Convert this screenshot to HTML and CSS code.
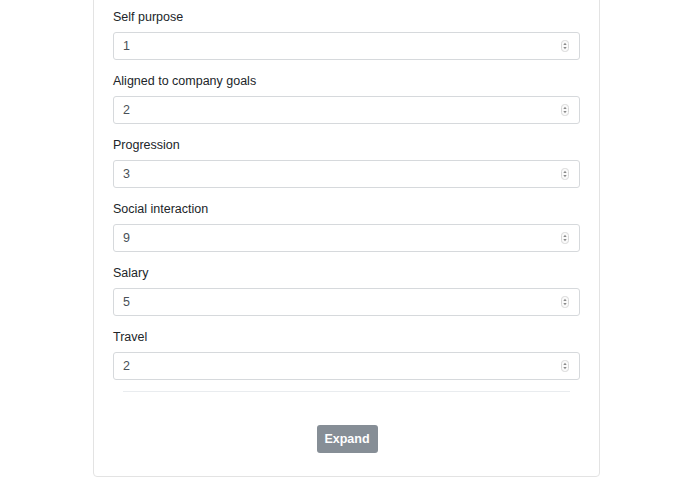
FILE: index.html
```html
<!DOCTYPE html>
<html>
<head>
<meta charset="utf-8">
<link rel="stylesheet" href="styles.css">
</head>
<body>
<div class="card">
  <form class="form">
    <div class="group">
      <label class="label">Self purpose</label>
      <div class="field"><span class="value">1</span><svg class="spin" width="8" height="12" viewBox="0 0 8 12"><rect x="0.5" y="0.5" width="7" height="11" rx="3" fill="#fafafa" stroke="#d8d8d8"/><path d="M2.3 5 L4 2.8 L5.7 5 Z M2.3 7 L4 9.2 L5.7 7 Z" fill="#8a8a8a"/></svg></div>
    </div>
    <div class="group">
      <label class="label">Aligned to company goals</label>
      <div class="field"><span class="value">2</span><svg class="spin" width="8" height="12" viewBox="0 0 8 12"><rect x="0.5" y="0.5" width="7" height="11" rx="3" fill="#fafafa" stroke="#d8d8d8"/><path d="M2.3 5 L4 2.8 L5.7 5 Z M2.3 7 L4 9.2 L5.7 7 Z" fill="#8a8a8a"/></svg></div>
    </div>
    <div class="group">
      <label class="label">Progression</label>
      <div class="field"><span class="value">3</span><svg class="spin" width="8" height="12" viewBox="0 0 8 12"><rect x="0.5" y="0.5" width="7" height="11" rx="3" fill="#fafafa" stroke="#d8d8d8"/><path d="M2.3 5 L4 2.8 L5.7 5 Z M2.3 7 L4 9.2 L5.7 7 Z" fill="#8a8a8a"/></svg></div>
    </div>
    <div class="group">
      <label class="label">Social interaction</label>
      <div class="field"><span class="value">9</span><svg class="spin" width="8" height="12" viewBox="0 0 8 12"><rect x="0.5" y="0.5" width="7" height="11" rx="3" fill="#fafafa" stroke="#d8d8d8"/><path d="M2.3 5 L4 2.8 L5.7 5 Z M2.3 7 L4 9.2 L5.7 7 Z" fill="#8a8a8a"/></svg></div>
    </div>
    <div class="group">
      <label class="label">Salary</label>
      <div class="field"><span class="value">5</span><svg class="spin" width="8" height="12" viewBox="0 0 8 12"><rect x="0.5" y="0.5" width="7" height="11" rx="3" fill="#fafafa" stroke="#d8d8d8"/><path d="M2.3 5 L4 2.8 L5.7 5 Z M2.3 7 L4 9.2 L5.7 7 Z" fill="#8a8a8a"/></svg></div>
    </div>
    <div class="group">
      <label class="label">Travel</label>
      <div class="field"><span class="value">2</span><svg class="spin" width="8" height="12" viewBox="0 0 8 12"><rect x="0.5" y="0.5" width="7" height="11" rx="3" fill="#fafafa" stroke="#d8d8d8"/><path d="M2.3 5 L4 2.8 L5.7 5 Z M2.3 7 L4 9.2 L5.7 7 Z" fill="#8a8a8a"/></svg></div>
    </div>
    <hr class="rule">
    <div class="actions">
      <button type="button" class="btn">Expand</button>
    </div>
  </form>
</div>
</body>
</html>
```
FILE: styles.css
```css
html, body {
  margin: 0;
  padding: 0;
  background: #ffffff;
}
body {
  font-family: "Liberation Sans", Arial, Helvetica, sans-serif;
  font-size: 12.5px;
  color: #212529;
}
.card {
  margin: -40px 0 0 93px;
  border: 1px solid #e3e3e3;
  border-radius: 4px;
  padding: 0 19px 23px 19px;
  box-sizing: content-box;
  width: 467px;
}
.form {
  padding-top: 46px;
}
.group {
  margin-bottom: 11px;
}
.label {
  display: block;
  line-height: 20px;
  margin-bottom: 5px;
  color: #212529;
}
.field {
  height: 28px;
  box-sizing: border-box;
  border: 1px solid #d6d9dc;
  border-radius: 3px;
  display: flex;
  align-items: center;
  justify-content: space-between;
  padding: 0 9px 0 9px;
  background: #fff;
}
.value {
  color: #495057;
  font-size: 12.5px;
}
.spin {
  display: block;
  margin-right: 1px;
}
.rule {
  border: 0;
  border-top: 1px solid #e9ecef;
  margin: 0 10px 0 10px;
  height: 0;
}
.actions {
  display: flex;
  justify-content: center;
  padding-top: 33px;
}
.btn {
  width: 61px;
  height: 28px;
  border: 0;
  border-radius: 3px;
  background: #868e96;
  color: #fff;
  font-family: "Liberation Sans", Arial, sans-serif;
  font-size: 12.5px;
  font-weight: 600;
  padding: 0;
  margin-left: 1px;
}
```
